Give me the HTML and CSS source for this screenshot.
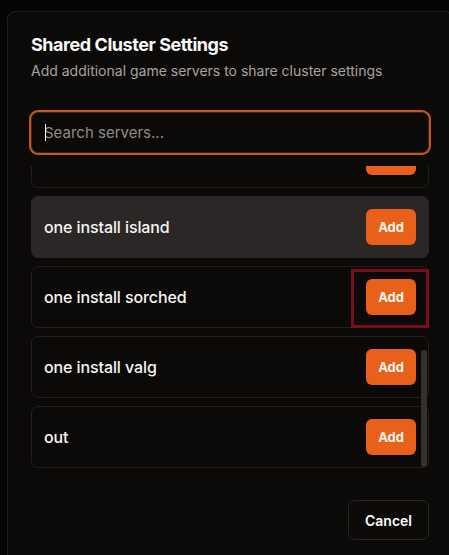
FILE: index.html
```html
<!DOCTYPE html>
<html lang="en">
<head>
    <meta charset="UTF-8">
    <meta name="viewport" content="width=device-width, initial-scale=1.0">
    <title>Shared Cluster Settings</title>
    <link rel="stylesheet" href="styles.css">
</head>
<body>

<div class="dialog">
    <button class="close-button" aria-label="Close">
        <svg width="12" height="12" viewBox="0 0 12 12" fill="none" stroke="currentColor" stroke-width="1.4" stroke-linecap="round">
            <path d="M1.5 1.5L10.5 10.5M10.5 1.5L1.5 10.5"/>
        </svg>
    </button>

    <div class="dialog-header">
        <h2 class="dialog-title">Shared Cluster Settings</h2>
        <p class="dialog-subtitle">Add additional game servers to share cluster settings</p>
    </div>

    <div class="search">
        <span class="caret"></span>
        <input class="search-input" type="text" placeholder="Search servers...">
    </div>

    <div class="server-scroll">
        <div class="server-list">
            <div class="server-row">
                <span class="server-name">one install aberration</span>
                <button class="add-button">Add</button>
            </div>
            <div class="server-row hovered">
                <span class="server-name">one install island</span>
                <button class="add-button">Add</button>
            </div>
            <div class="server-row">
                <span class="server-name">one install sorched</span>
                <button class="add-button">Add</button>
                <span class="highlight"></span>
            </div>
            <div class="server-row">
                <span class="server-name">one install valg</span>
                <button class="add-button">Add</button>
            </div>
            <div class="server-row">
                <span class="server-name">out</span>
                <button class="add-button">Add</button>
            </div>
        </div>
        <div class="scroll-thumb"></div>
    </div>

    <div class="dialog-footer">
        <button class="cancel-button">Cancel</button>
    </div>
</div>

</body>
</html>
```

FILE: styles.css
```css
body {
    margin: 0;
    height: 555px;
    overflow: hidden;
    background: #050505;
    font-family: Inter, 'Noto Sans', sans-serif;
    color: #fafaf9;
}
.dialog {
    position: relative;
    margin: 11px 0 0 7px;
    width: 398px;
    padding: 19px 23px 24px;
    background: #0c0a09;
    border: 1px solid #211e1c;
    border-radius: 8px;
}
.close-button {
    position: absolute;
    top: 17px;
    right: -32px;
    padding: 0;
    border: none;
    background: none;
    color: #b5b0ac;
    display: flex;
}
.dialog-title {
    margin: 0;
    font-size: 18px;
    line-height: 28px;
    font-weight: 700;
    letter-spacing: -0.45px;
}
.dialog-subtitle {
    margin: 2px 0 0;
    font-size: 14px;
    line-height: 20px;
    color: #a8a29e;
}
.search {
    position: relative;
    margin-top: 31px;
    height: 41px;
    box-sizing: border-box;
    border: 1px solid #3a2418;
    border-radius: 7px;
    box-shadow: 0 0 0 2px #c4561e;
    background: #0c0a09;
    display: flex;
    align-items: center;
}
.search-input {
    flex: 1;
    height: 100%;
    padding: 0 12px;
    border: none;
    outline: none;
    background: transparent;
    font-family: inherit;
    font-size: 15px;
    color: #fafaf9;
}
.search-input::placeholder {
    color: #8f8a86;
}
.caret {
    position: absolute;
    left: 13px;
    top: 11px;
    width: 1px;
    height: 17px;
    background: #f5f5f4;
}
.server-scroll {
    position: relative;
    margin-top: 13px;
    height: 302px;
    overflow: hidden;
}
.server-list {
    margin-top: -40px;
    display: flex;
    flex-direction: column;
    gap: 8px;
}
.server-row {
    position: relative;
    display: flex;
    align-items: center;
    justify-content: space-between;
    height: 62px;
    box-sizing: border-box;
    padding: 0 12px;
    border: 1px solid #221f1d;
    border-radius: 7px;
}
.server-row.hovered {
    background: #2b2726;
    border-color: #2b2726;
}
.server-name {
    font-size: 16px;
    font-weight: 500;
    letter-spacing: -0.1px;
    color: #f5f5f4;
}
.add-button {
    height: 36px;
    padding: 0 12px;
    border: none;
    border-radius: 6px;
    background: #e9601a;
    color: #fff7ed;
    font-family: inherit;
    font-size: 13px;
    font-weight: 700;
}
.highlight {
    position: absolute;
    top: 2px;
    right: -1px;
    bottom: -1px;
    width: 78px;
    box-sizing: border-box;
    border: 3px solid #7a0d1d;
}
.scroll-thumb {
    position: absolute;
    right: 2px;
    top: 184px;
    width: 6px;
    height: 117px;
    border-radius: 3px;
    background: #35312f;
}
.dialog-footer {
    display: flex;
    justify-content: flex-end;
    margin-top: 32px;
}
.cancel-button {
    height: 40px;
    padding: 0 16px;
    border: 1px solid #2a2624;
    border-radius: 7px;
    background: #0c0a09;
    color: #fafaf9;
    font-family: inherit;
    font-size: 14px;
    font-weight: 600;
}
```
